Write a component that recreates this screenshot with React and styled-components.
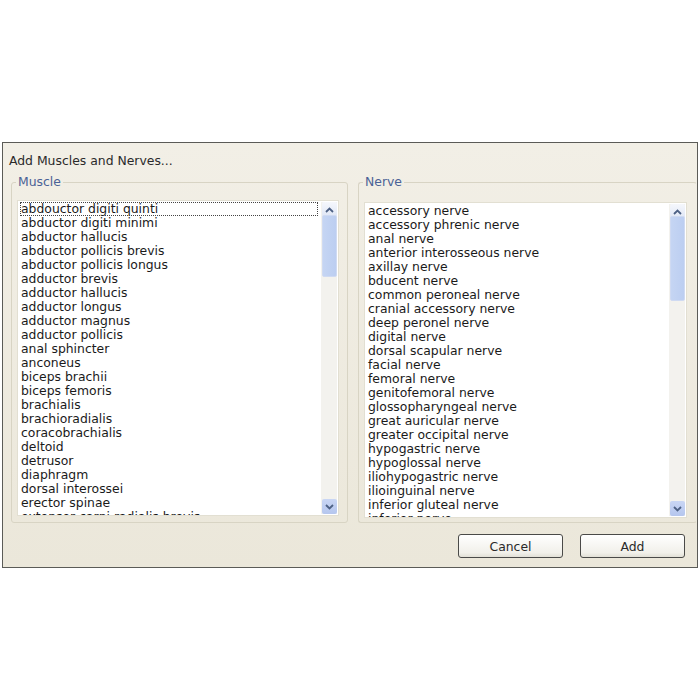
import React from 'react'
import styled, { createGlobalStyle } from 'styled-components'

const Global = createGlobalStyle`
  html, body { margin: 0; padding: 0; background: #fff; }
  body { font-family: "DejaVu Sans", Verdana, sans-serif; }
`

const Page = styled.div`
  padding: 142px 2px 0 2px;
`

const Dialog = styled.div`
  width: 694px;
  height: 424px;
  border: 1px solid #5b5b57;
  background: linear-gradient(#f2efe6, #ebe7da);
  display: flex;
  flex-direction: column;
  box-sizing: content-box;
`

const Title = styled.div`
  font-size: 12.4px;
  color: #2a2a2a;
  padding: 11px 0 0 6px;
  height: 21px;
  line-height: 14px;
`

const Groups = styled.div`
  display: flex;
  gap: 10px;
  padding: 0 0 0 8px;
`

const Group = styled.fieldset`
  margin: 0;
  width: ${p => p.$w}px;
  height: ${p => p.$h}px;
  border: 1px solid #d8d4c4;
  border-right-color: ${p => (p.$open ? 'transparent' : '#d8d4c4')};
  border-radius: 3px;
  padding: ${p => p.$pt}px 0 0 ${p => p.$pl}px;
  box-sizing: border-box;
  legend {
    font-size: 12.4px;
    color: #4a6296;
    padding: 0 2px;
    margin-left: -1px;
    line-height: 14px;
  }
`

const ListBox = styled.div`
  width: ${p => p.$w}px;
  height: ${p => p.$h}px;
  background: #fff;
  border: 1px solid #e2dfd2;
  display: flex;
  box-sizing: border-box;
  overflow: hidden;
`

const Items = styled.ul`
  list-style: none;
  margin: 0;
  padding: 1px 0 0 2px;
  flex: 1;
  overflow: hidden;
`

const Item = styled.li`
  font-size: 12.4px;
  line-height: 14px;
  height: 14px;
  color: #1a1a1a;
  white-space: nowrap;
  padding-left: 1px;
  outline: ${p => (p.$focus ? '1px dotted #444' : 'none')};
  outline-offset: -1px;
  margin-right: 3px;
`

const Scroll = styled.div`
  width: 16px;
  margin: 1px 1px 1px 0;
  background: #f3f2ee;
  display: flex;
  flex-direction: column;
  align-items: center;
`

const Arrow = styled.div`
  width: 15px;
  height: 15px;
  border-radius: 2px;
  background: ${p => (p.$up ? 'linear-gradient(#f5f7fc, #dfe6f5)' : 'linear-gradient(#c9d6f4, #b5c6ee)')};
  display: flex;
  align-items: center;
  justify-content: center;
  svg { display: block; }
`

const Track = styled.div`
  flex: 1;
  width: 100%;
  display: flex;
  flex-direction: column;
  align-items: center;
`

const Thumb = styled.div`
  width: 13px;
  border-radius: 2px;
  background: linear-gradient(90deg, #c5d5f3, #bccef1);
  border: 1px solid #cfdaf2;
`

const Buttons = styled.div`
  display: flex;
  justify-content: flex-end;
  gap: 17px;
  padding: 11px 12px 0 0;
`

const Button = styled.button`
  width: 105px;
  height: 24px;
  border: 1px solid #4a4a48;
  border-radius: 3px;
  background: linear-gradient(#ffffff, #f1f0ea 80%, #e2e0d6);
  font-family: "DejaVu Sans", Verdana, sans-serif;
  font-size: 12.4px;
  color: #2a2a2a;
  padding: 0;
`

const muscles = [
  'abdouctor digiti quinti', 'abductor digiti minimi', 'abductor hallucis',
  'abductor pollicis brevis', 'abductor pollicis longus', 'adductor brevis',
  'adductor hallucis', 'adductor longus', 'adductor magnus', 'adductor pollicis',
  'anal sphincter', 'anconeus', 'biceps brachii', 'biceps femoris', 'brachialis',
  'brachioradialis', 'coracobrachialis', 'deltoid', 'detrusor', 'diaphragm',
  'dorsal interossei', 'erector spinae', 'extensor carpi radialis brevis',
]

const nerves = [
  'accessory nerve', 'accessory phrenic nerve', 'anal nerve',
  'anterior interosseous nerve', 'axillay nerve', 'bducent nerve',
  'common peroneal nerve', 'cranial accessory nerve', 'deep peronel nerve',
  'digital nerve', 'dorsal scapular nerve', 'facial nerve', 'femoral nerve',
  'genitofemoral nerve', 'glossopharyngeal nerve', 'great auricular nerve',
  'greater occipital nerve', 'hypogastric nerve', 'hypoglossal nerve',
  'iliohypogastric nerve', 'ilioinguinal nerve', 'inferior gluteal nerve',
  'inferior nerve',
]

const Chevron = ({ up }) => (
  <svg width="9" height="6" viewBox="0 0 9 6">
    <path d={up ? 'M1 5 L4.5 1.5 L8 5' : 'M1 1 L4.5 4.5 L8 1'} fill="none" stroke="#4d6185" strokeWidth="1.8" />
  </svg>
)

const ScrollBar = ({ top, size }) => (
  <Scroll>
    <Arrow $up><Chevron up /></Arrow>
    <Track>
      <Thumb style={{ marginTop: top, height: size }} />
    </Track>
    <Arrow><Chevron /></Arrow>
  </Scroll>
)

const List = ({ items, w, h, top, size, focus }) => (
  <ListBox $w={w} $h={h}>
    <Items>
      {items.map((t, i) => (
        <Item key={t} $focus={focus && i === 0}>{t}</Item>
      ))}
    </Items>
    <ScrollBar top={top} size={size} />
  </ListBox>
)

const App = () => (
  <>
    <Global />
    <Page>
      <Dialog>
        <Title>Add Muscles and Nerves...</Title>
        <Groups>
          <Group $w={337} $h={348} $pt={11} $pl={5}>
            <legend>Muscle</legend>
            <List items={muscles} w={322} h={316} top={-2} size={60} focus />
          </Group>
          <Group $w={339} $h={348} $pt={13} $pl={5} $open>
            <legend>Nerve</legend>
            <List items={nerves} w={323} h={316} top={-3} size={83} />
          </Group>
        </Groups>
        <Buttons>
          <Button>Cancel</Button>
          <Button>Add</Button>
        </Buttons>
      </Dialog>
    </Page>
  </>
)

export default App
